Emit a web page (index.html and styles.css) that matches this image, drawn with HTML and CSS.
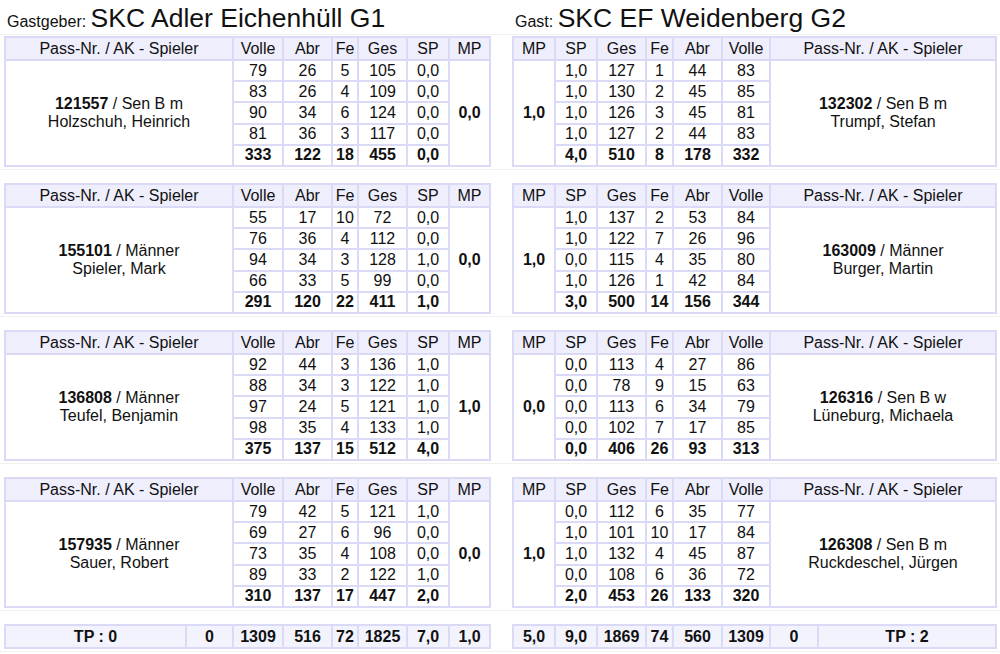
FILE: index.html
```html
<!DOCTYPE html>
<html lang="de">
<head>
<meta charset="utf-8">
<title>Spielbericht</title>
<link rel="stylesheet" href="styles.css">
</head>
<body>
<div class="titles">
  <div class="title left-w"><span class="label">Gastgeber:</span> <span class="team">SKC Adler Eichenhüll G1</span></div>
  <div class="title right-w"><span class="label">Gast:</span> <span class="team">SKC EF Weidenberg G2</span></div>
</div>
<div class="sheet">

  <div class="block">
    <div class="grid home">
      <div class="h">Pass-Nr. / AK - Spieler</div><div class="h">Volle</div><div class="h">Abr</div><div class="h">Fe</div><div class="h">Ges</div><div class="h">SP</div><div class="h">MP</div>
      <div class="name"><span><b>121557</b> / Sen B m</span><span>Holzschuh, Heinrich</span></div>
      <div>79</div><div>26</div><div>5</div><div>105</div><div>0,0</div>
      <div class="mp">0,0</div>
      <div>83</div><div>26</div><div>4</div><div>109</div><div>0,0</div>
      <div>90</div><div>34</div><div>6</div><div>124</div><div>0,0</div>
      <div>81</div><div>36</div><div>3</div><div>117</div><div>0,0</div>
      <div class="s">333</div><div class="s">122</div><div class="s">18</div><div class="s">455</div><div class="s">0,0</div>
    </div>
    <div class="grid guest">
      <div class="h">MP</div><div class="h">SP</div><div class="h">Ges</div><div class="h">Fe</div><div class="h">Abr</div><div class="h">Volle</div><div class="h">Pass-Nr. / AK - Spieler</div>
      <div class="mp">1,0</div>
      <div>1,0</div><div>127</div><div>1</div><div>44</div><div>83</div>
      <div class="name"><span><b>132302</b> / Sen B m</span><span>Trumpf, Stefan</span></div>
      <div>1,0</div><div>130</div><div>2</div><div>45</div><div>85</div>
      <div>1,0</div><div>126</div><div>3</div><div>45</div><div>81</div>
      <div>1,0</div><div>127</div><div>2</div><div>44</div><div>83</div>
      <div class="s">4,0</div><div class="s">510</div><div class="s">8</div><div class="s">178</div><div class="s">332</div>
    </div>
  </div>

  <div class="block">
    <div class="grid home">
      <div class="h">Pass-Nr. / AK - Spieler</div><div class="h">Volle</div><div class="h">Abr</div><div class="h">Fe</div><div class="h">Ges</div><div class="h">SP</div><div class="h">MP</div>
      <div class="name"><span><b>155101</b> / Männer</span><span>Spieler, Mark</span></div>
      <div>55</div><div>17</div><div>10</div><div>72</div><div>0,0</div>
      <div class="mp">0,0</div>
      <div>76</div><div>36</div><div>4</div><div>112</div><div>0,0</div>
      <div>94</div><div>34</div><div>3</div><div>128</div><div>1,0</div>
      <div>66</div><div>33</div><div>5</div><div>99</div><div>0,0</div>
      <div class="s">291</div><div class="s">120</div><div class="s">22</div><div class="s">411</div><div class="s">1,0</div>
    </div>
    <div class="grid guest">
      <div class="h">MP</div><div class="h">SP</div><div class="h">Ges</div><div class="h">Fe</div><div class="h">Abr</div><div class="h">Volle</div><div class="h">Pass-Nr. / AK - Spieler</div>
      <div class="mp">1,0</div>
      <div>1,0</div><div>137</div><div>2</div><div>53</div><div>84</div>
      <div class="name"><span><b>163009</b> / Männer</span><span>Burger, Martin</span></div>
      <div>1,0</div><div>122</div><div>7</div><div>26</div><div>96</div>
      <div>0,0</div><div>115</div><div>4</div><div>35</div><div>80</div>
      <div>1,0</div><div>126</div><div>1</div><div>42</div><div>84</div>
      <div class="s">3,0</div><div class="s">500</div><div class="s">14</div><div class="s">156</div><div class="s">344</div>
    </div>
  </div>

  <div class="block">
    <div class="grid home">
      <div class="h">Pass-Nr. / AK - Spieler</div><div class="h">Volle</div><div class="h">Abr</div><div class="h">Fe</div><div class="h">Ges</div><div class="h">SP</div><div class="h">MP</div>
      <div class="name"><span><b>136808</b> / Männer</span><span>Teufel, Benjamin</span></div>
      <div>92</div><div>44</div><div>3</div><div>136</div><div>1,0</div>
      <div class="mp">1,0</div>
      <div>88</div><div>34</div><div>3</div><div>122</div><div>1,0</div>
      <div>97</div><div>24</div><div>5</div><div>121</div><div>1,0</div>
      <div>98</div><div>35</div><div>4</div><div>133</div><div>1,0</div>
      <div class="s">375</div><div class="s">137</div><div class="s">15</div><div class="s">512</div><div class="s">4,0</div>
    </div>
    <div class="grid guest">
      <div class="h">MP</div><div class="h">SP</div><div class="h">Ges</div><div class="h">Fe</div><div class="h">Abr</div><div class="h">Volle</div><div class="h">Pass-Nr. / AK - Spieler</div>
      <div class="mp">0,0</div>
      <div>0,0</div><div>113</div><div>4</div><div>27</div><div>86</div>
      <div class="name"><span><b>126316</b> / Sen B w</span><span>Lüneburg, Michaela</span></div>
      <div>0,0</div><div>78</div><div>9</div><div>15</div><div>63</div>
      <div>0,0</div><div>113</div><div>6</div><div>34</div><div>79</div>
      <div>0,0</div><div>102</div><div>7</div><div>17</div><div>85</div>
      <div class="s">0,0</div><div class="s">406</div><div class="s">26</div><div class="s">93</div><div class="s">313</div>
    </div>
  </div>

  <div class="block">
    <div class="grid home">
      <div class="h">Pass-Nr. / AK - Spieler</div><div class="h">Volle</div><div class="h">Abr</div><div class="h">Fe</div><div class="h">Ges</div><div class="h">SP</div><div class="h">MP</div>
      <div class="name"><span><b>157935</b> / Männer</span><span>Sauer, Robert</span></div>
      <div>79</div><div>42</div><div>5</div><div>121</div><div>1,0</div>
      <div class="mp">0,0</div>
      <div>69</div><div>27</div><div>6</div><div>96</div><div>0,0</div>
      <div>73</div><div>35</div><div>4</div><div>108</div><div>0,0</div>
      <div>89</div><div>33</div><div>2</div><div>122</div><div>1,0</div>
      <div class="s">310</div><div class="s">137</div><div class="s">17</div><div class="s">447</div><div class="s">2,0</div>
    </div>
    <div class="grid guest">
      <div class="h">MP</div><div class="h">SP</div><div class="h">Ges</div><div class="h">Fe</div><div class="h">Abr</div><div class="h">Volle</div><div class="h">Pass-Nr. / AK - Spieler</div>
      <div class="mp">1,0</div>
      <div>0,0</div><div>112</div><div>6</div><div>35</div><div>77</div>
      <div class="name"><span><b>126308</b> / Sen B m</span><span>Ruckdeschel, Jürgen</span></div>
      <div>1,0</div><div>101</div><div>10</div><div>17</div><div>84</div>
      <div>1,0</div><div>132</div><div>4</div><div>45</div><div>87</div>
      <div>0,0</div><div>108</div><div>6</div><div>36</div><div>72</div>
      <div class="s">2,0</div><div class="s">453</div><div class="s">26</div><div class="s">133</div><div class="s">320</div>
    </div>
  </div>

  <div class="block last">
    <div class="grid total home-total">
      <div>TP : 0</div><div>0</div><div>1309</div><div>516</div><div>72</div><div>1825</div><div>7,0</div><div>1,0</div>
    </div>
    <div class="grid total guest-total">
      <div>5,0</div><div>9,0</div><div>1869</div><div>74</div><div>560</div><div>1309</div><div>0</div><div>TP : 2</div>
    </div>
  </div>

</div>
</body>
</html>
```

FILE: styles.css
```css
* {
  box-sizing: border-box;
}

body {
  margin: 0;
  background: #ffffff;
  color: #111111;
  font-family: "Liberation Sans", Arial, Helvetica, sans-serif;
  font-size: 16px;
}

.titles {
  display: flex;
  gap: 21px;
  padding-left: 4px;
  height: 34px;
  padding-top: 4px;
  line-height: 28px;
  white-space: nowrap;
}

.title {
  padding-left: 3px;
}

.left-w {
  width: 487px;
}

.right-w {
  width: 485px;
}

.label {
  font-size: 16px;
}

.team {
  font-size: 26.5px;
}

.sheet {
  border-top: 1px solid #f1f1f1;
  padding-top: 1px;
}

.block {
  display: flex;
  gap: 21px;
  padding-left: 4px;
  padding-bottom: 2px;
  border-bottom: 1px solid #f1f1f1;
  margin-bottom: 13px;
}

.block.last {
  margin-bottom: 0;
}

.grid {
  display: grid;
  background: #dadaf6;
  padding: 2px;
  gap: 2px;
  height: 131px;
  grid-template-rows: 21px repeat(5, 1fr);
  line-height: 18px;
}

.home {
  width: 487px;
  grid-template-columns: 226px 48px 47px 24px 47px 40px 39px;
}

.guest {
  width: 485px;
  grid-template-columns: 40px 40px 47px 25px 47px 46px 224px;
}

.grid > div {
  background: #ffffff;
  display: flex;
  align-items: center;
  justify-content: center;
  white-space: nowrap;
}

.grid > .h {
  background: #eeeefc;
}

.grid > .name {
  grid-row: span 5;
  flex-direction: column;
  line-height: 18px;
}

.grid > .mp {
  grid-row: span 5;
  font-weight: bold;
}

.grid > .s {
  font-weight: bold;
}

.total {
  height: 25px;
  grid-template-rows: 21px;
  font-weight: bold;
}

.grid.total > div {
  background: #f3f3fd;
}

.home-total {
  width: 487px;
  grid-template-columns: 179px 45px 48px 47px 24px 47px 40px 39px;
}

.guest-total {
  width: 485px;
  grid-template-columns: 40px 40px 47px 25px 47px 46px 46px 176px;
}
```
